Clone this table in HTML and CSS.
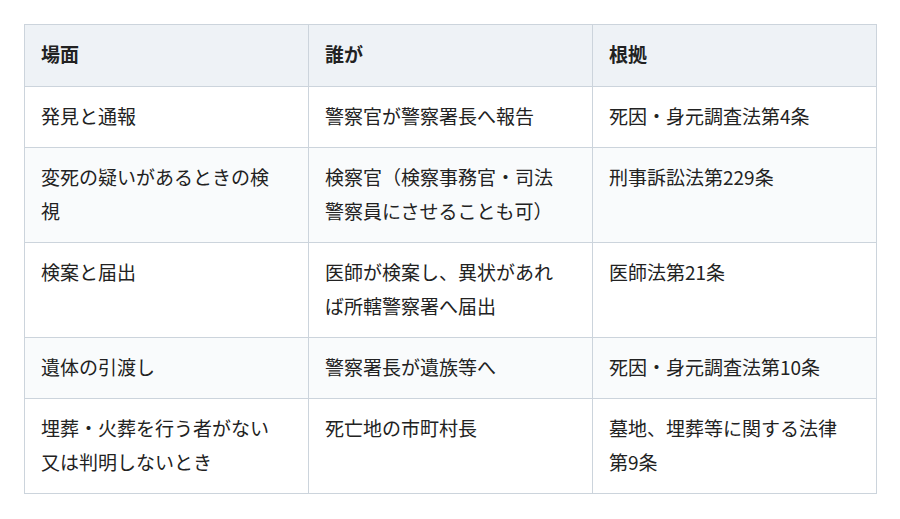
FILE: index.html
```html
<!DOCTYPE html>
<html lang="ja">
<head>
<meta charset="utf-8">
<link rel="stylesheet" href="styles.css">
</head>
<body>
<table class="law-table">
  <colgroup><col class="c"><col class="c"><col class="c"></colgroup>
  <thead>
    <tr><th>場面</th><th>誰が</th><th>根拠</th></tr>
  </thead>
  <tbody>
    <tr><td>発見と通報</td><td>警察官が警察署長へ報告</td><td>死因・身元調査法第4条</td></tr>
    <tr><td>変死の疑いがあるときの検視</td><td>検察官（検察事務官・司法警察員にさせることも可）</td><td>刑事訴訟法第229条</td></tr>
    <tr><td>検案と届出</td><td>医師が検案し、異状があれば所轄警察署へ届出</td><td>医師法第21条</td></tr>
    <tr><td>遺体の引渡し</td><td>警察署長が遺族等へ</td><td>死因・身元調査法第10条</td></tr>
    <tr><td>埋葬・火葬を行う者がない又は判明しないとき</td><td>死亡地の市町村長</td><td>墓地、埋葬等に関する法律第9条</td></tr>
  </tbody>
</table>
</body>
</html>
```

FILE: styles.css
```css
html, body {
  margin: 0;
  background: #ffffff;
}
body {
  padding: 24px;
  font-family: "Noto Sans CJK JP", "Noto Sans", sans-serif;
  color: #222222;
}
.law-table {
  width: 852px;
  border-collapse: collapse;
  table-layout: fixed;
  font-size: 19px;
  line-height: 34px;
}
.law-table .c {
  width: 284px;
}
.law-table th,
.law-table td {
  border: 1px solid #ccd4dc;
  padding: 12px 24px 14px 16px;
  text-align: left;
  vertical-align: top;
}
.law-table th {
  background: #eef2f6;
  font-weight: 700;
  padding-top: 12px;
  padding-bottom: 15px;
}
.law-table tbody tr:nth-child(even) td {
  background: #f9fbfc;
}
```
